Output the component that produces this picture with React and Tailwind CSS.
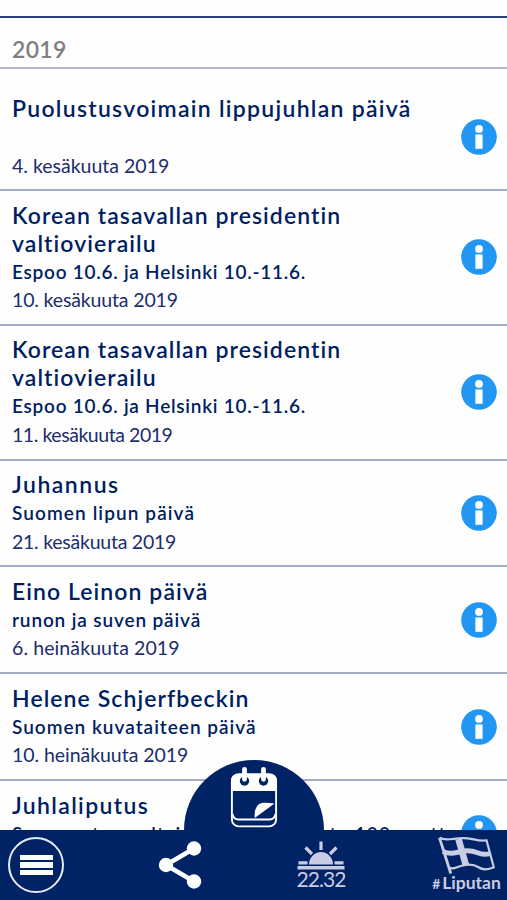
import clsx from 'clsx';

const flagDays = [
  {
    title: 'Puolustusvoimain lippujuhlan päivä',
    subtitle: '',
    date: '4. kesäkuuta 2019',
    titleClass: 'tracking-[1.28px]',
  },
  {
    title: 'Korean tasavallan presidentin valtiovierailu',
    subtitle: 'Espoo 10.6. ja Helsinki 10.-11.6.',
    date: '10. kesäkuuta 2019',
    titleClass: 'tracking-[1.07px]',
    subtitleClass: 'tracking-[0.74px]',
    dateClass: 'tracking-[-0.15px]',
  },
  {
    title: 'Korean tasavallan presidentin valtiovierailu',
    subtitle: 'Espoo 10.6. ja Helsinki 10.-11.6.',
    date: '11. kesäkuuta 2019',
    titleClass: 'tracking-[1.07px]',
    subtitleClass: 'tracking-[0.74px]',
    dateClass: 'tracking-[-0.45px]',
  },
  {
    title: 'Juhannus',
    subtitle: 'Suomen lipun päivä',
    date: '21. kesäkuuta 2019',
    titleClass: 'tracking-[1.5px]',
    subtitleClass: 'tracking-[1.1px]',
    dateClass: 'tracking-[-0.25px]',
  },
  {
    title: 'Eino Leinon päivä',
    subtitle: 'runon ja suven päivä',
    date: '6. heinäkuuta 2019',
    titleClass: 'tracking-[1.08px]',
    subtitleClass: 'tracking-[0.86px]',
    dateClass: 'tracking-[0.1px]',
  },
  {
    title: 'Helene Schjerfbeckin',
    subtitle: 'Suomen kuvataiteen päivä',
    date: '10. heinäkuuta 2019',
    titleClass: 'tracking-[1.08px]',
    subtitleClass: 'tracking-[1px]',
    dateClass: 'tracking-[-0.05px]',
  },
  {
    title: 'Juhlaliputus',
    subtitle: 'Suomen tasavaltainen hallitusmuoto 100 vuotta',
    date: '',
    titleClass: 'tracking-[1.35px]',
    subtitleClass: 'tracking-[1px]',
  },
];

function InfoIcon() {
  return (
    <svg viewBox="0 0 36 36" className="h-9 w-9 shrink-0">
      <circle cx="18" cy="18" r="17.8" fill="#2196f3" />
      <circle cx="18" cy="9.9" r="3.9" fill="#fff" />
      <path d="M14.4 15.4h7.2v14.4h-7.2z" fill="#fff" />
    </svg>
  );
}

function CalendarIcon() {
  return (
    <svg viewBox="0 0 48 62" className="h-[62px] w-12">
      <rect x="1.9" y="8.2" width="44.2" height="52.2" rx="7" fill="none" stroke="#fff" strokeWidth="1.9" />
      <path d="M1 25V15q0-7 7-7h32q7 0 7 7v10z" fill="#fff" />
      <path d="M2.5 48q1 5.5 6 5.500h31q5 0 6-5.500" fill="none" stroke="#fff" strokeWidth="1.8" />
      <circle cx="14.5" cy="15" r="4.7" fill="#002366" />
      <circle cx="33.5" cy="15" r="4.7" fill="#002366" />
      <path d="M14.5 3.3v10M33.5 3.3v10" stroke="#fff" strokeWidth="4.8" strokeLinecap="round" />
      <path d="M24.700 52q-1-14 8-15.200q6-.4 11.800 .8z" fill="#fff" />
    </svg>
  );
}

function ShareIcon() {
  return (
    <svg viewBox="0 0 44 50" className="h-[50px] w-11">
      <path d="M36 8.5 8 25l28 16.5" fill="none" stroke="#fff" strokeWidth="4.6" />
      <circle cx="8" cy="25" r="7.2" fill="#fff" />
      <circle cx="36" cy="8.5" r="7.2" fill="#fff" />
      <circle cx="36" cy="41.5" r="7.2" fill="#fff" />
    </svg>
  );
}

function SunsetIcon() {
  return (
    <svg viewBox="0 0 48 29" className="h-[29px] w-12" fill="#c9cce2">
      <path d="M12 23.5a12 12.5 0 0 1 24 0z" />
      <path d="M1.5 20.3h9v3.2h-9zM37.5 20.3h9v3.2h-9zM.5 25h47v3.5H.5z" />
      <path d="M24 .5v8.5M8.500 6.500l6.500 6.500M39.500 6.500l-6.500 6.500" stroke="#c9cce2" strokeWidth="3.2" />
    </svg>
  );
}

function FlagIcon() {
  return (
    <svg viewBox="0 0 58 38" className="h-[38px] w-[58px]" fill="none" stroke="#c9cce2">
      <path d="M1.500 1.800 12.800 37.500" strokeWidth="2.8" />
      <path
        d="M1.500 1.800C6 4.500 11 3.500 16 2.800S27 1.500 33 2.800s10 2.700 15.500 1.500L55.800 31.300C50 34 44.500 34 40 31s-9-3-15.500-1.500S15 34.500 11 31.500"
        strokeWidth="2.2"
      />
      <path d="M5 15.500c7 3 12 1.500 18 0s11-1 16.500 1.300 9 1.800 13 .5" strokeWidth="5" />
      <path d="M20.500 3 28 29.500" strokeWidth="6.6" />
    </svg>
  );
}

function FlagDay({ day }) {
  return (
    <li
      className={clsx(
        'flex items-center border-b-2 border-[#a5abc6] pr-[10px] pl-3',
        day.subtitle ? 'pt-[9.5px] pb-[9.5px]' : 'pt-[25px] pb-[9.3px]'
      )}
    >
      <div className="flex-1 text-[#001f62]">
        <h2 className={clsx('max-w-[420px] text-[23px] leading-7 font-semibold', day.titleClass)}>{day.title}</h2>
        <p className={clsx('min-h-[29.5px] pt-px text-[19px] leading-[28.5px] font-semibold whitespace-nowrap', day.subtitleClass)}>
          {day.subtitle}
        </p>
        <p className={clsx('min-h-[28.3px] text-[19.5px] leading-[28.3px] text-[#202c6c]', day.dateClass)}>{day.date}</p>
      </div>
      <InfoIcon />
    </li>
  );
}

export default function App() {
  return (
    <div className="flex h-[900px] w-[507px] flex-col overflow-hidden bg-[#fefefe] font-['Lato',sans-serif]">
      <div className="h-[18px] shrink-0 border-b-2 border-[#2c3e74]" />
      <div className="h-[51px] shrink-0 border-b-2 border-[#b5b8d0] pl-3 text-[23px] leading-[62px] font-semibold tracking-[0.3px] text-[#808080]">
        2019
      </div>
      <ul className="min-h-0 flex-1 overflow-hidden">
        {flagDays.map((day, index) => (
          <FlagDay key={index} day={day} />
        ))}
      </ul>

      <nav className="relative flex h-[70px] shrink-0 bg-[#002366] text-[#c9cce2]">
        <div className="absolute -top-[70px] left-[184px] flex h-[70px] w-[140px] justify-center rounded-t-full bg-[#002366] pt-1.5">
          <CalendarIcon />
        </div>
        <button className="mt-[7px] ml-2 flex h-14 w-14 shrink-0 flex-col items-center justify-center gap-[2px] rounded-full border-2 border-[#e8ebf5]">
          <span className="h-[5.6px] w-[33px] bg-white" />
          <span className="h-[5.6px] w-[33px] bg-white" />
          <span className="h-[5.6px] w-[33px] bg-white" />
        </button>
        <button className="mt-[10px] ml-[94px] h-[50px] w-11 shrink-0">
          <ShareIcon />
        </button>
        <div className="mt-[11px] ml-[95px] flex w-12 shrink-0 flex-col items-center">
          <SunsetIcon />
          <span className="-mt-0.5 text-[21px] leading-[21px] tracking-[-0.9px]">22.32</span>
        </div>
        <div className="mt-[6px] ml-[84px] flex w-[75px] shrink-0 flex-col items-center">
          <FlagIcon />
          <span className="text-[17.5px] leading-[17px] font-bold whitespace-nowrap">
            <span className="mr-0.5 text-[14px]">#</span>Liputan
          </span>
        </div>
      </nav>
    </div>
  );
}
